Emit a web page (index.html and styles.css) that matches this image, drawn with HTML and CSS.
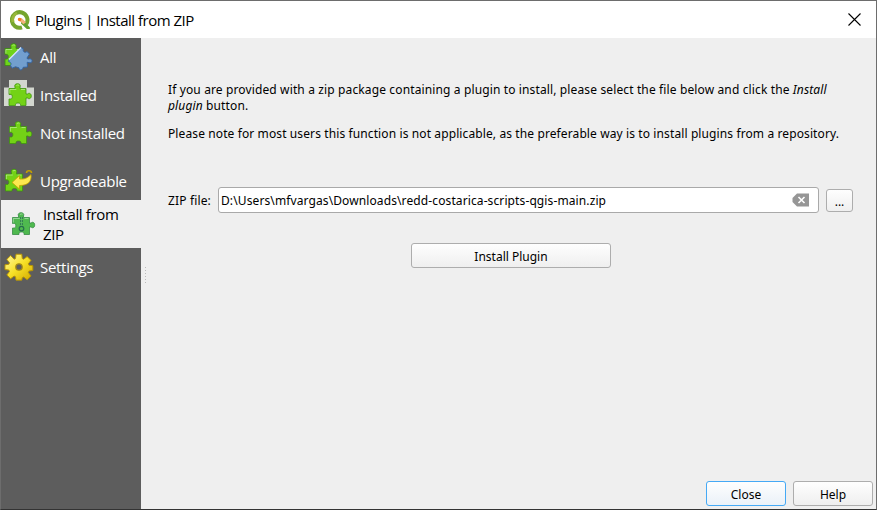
FILE: index.html
```
<!DOCTYPE html>
<html lang="en">
<head>
<meta charset="utf-8">
<title>Plugins | Install from ZIP</title>
<link rel="stylesheet" href="styles.css">
</head>
<body>
<svg class="defs" width="0" height="0">
  <defs>
    <linearGradient id="gold" x1="0" y1="0" x2="1" y2="1"><stop offset="0" stop-color="#fff9a8"/><stop offset=".5" stop-color="#f7e026"/><stop offset="1" stop-color="#d0a800"/></linearGradient>
    <symbol id="puzzle" viewBox="0 0 24 24">
      <path d="M1 5.500h6V4C6 2 7.500.7 9.500.7S13 2 12 4v1.500h6V11h1.500c1.500-1.500 3.800-.5 3.800 2s-2.300 3.500-3.800 2H18v7.500h-5.500V21.500c0-1-1-1.500-2.500-1.500S7.500 20.500 7.500 21.500v1H1V16h1c1.500.3 2.300-.7 2.300-2.300s-.8-2.700-2.300-2.200H1z" stroke-width=".8"/>
      <path d="M1.800 10.500V6.500h6.500M13 6.500h4M8.500 2.500q1-1 2.500-.3" fill="none" stroke="#fff" stroke-opacity=".5" stroke-width=".8"/>
    </symbol>
  </defs>
</svg>
<div class="window">
  <header class="titlebar">
    <svg class="logo" width="20" height="20" viewBox="0 0 20 20">
      <path d="M16.200 14.200A7.800 7.800 0 1 0 12 17.400" fill="none" stroke="#75a52d" stroke-width="4"/>
      <path d="M3 12A7.500 7.500 0 0 1 7 3" fill="none" stroke="#98b83a" stroke-width="3"/>
      <path d="M11 11l2.500-.2 6.300 6.400V19h-3L11 13.500z" fill="#63a02d"/>
      <path d="M8 8h3.500l4.500 4.300-2.500 1.900L8 9.800z" fill="#f3b27a"/>
      <circle cx="9.600" cy="9.500" r="1.700" fill="#f17d1b"/>
    </svg>
    <h1>Plugins | Install from ZIP</h1>
    <svg class="x" width="13" height="13" viewBox="0 0 13 13"><path d="M.5.5l12 12m0-12l-12 12" stroke="#000" stroke-width="1.100"/></svg>
  </header>
  <div class="main">
    <nav class="sidebar">
      <a class="item"><svg width="30" height="30" viewBox="0 0 30 30">
        <use href="#puzzle" x="0" y="1" width="24" height="24" fill="#6fd31b" stroke="#3b8d10"/>
        <path d="M5 17.500L17 5.500l2.300 1.300c-.7 3 1.500 4.500 3.700 2.700l2.500 2.500-2.500 4c.3 1.500 1.500 1 2.700.8 2.300 0 3.300 2.500 1.500 3.700-1.500 1-3-.5-4-.2l.3 4.700-4.300.3c-.8 3.500-4 3.300-4.300.5l-3.400-1-3.300 1.400-1.700-2.500c1.500-3-.5-3.600-1.800-4z" fill="#729fcf" stroke="#3465a4"/><path d="M5 17.500L17 5.500" stroke="#dceaff" stroke-width="1.300"/></svg><span>All</span></a>
      <a class="item"><svg width="30" height="30" viewBox="0 0 30 30">
        <path d="M5 0h18v7.500h7V26H0V7.500h5z" fill="#d3d7cf"/><use href="#puzzle" x="4" y="3" width="24" height="24" fill="#73d216" stroke="#3f9410"/></svg><span>Installed</span></a>
      <a class="item"><svg width="30" height="30" viewBox="0 0 30 30"><use href="#puzzle" x="4.500" y="3" width="24" height="24" fill="#73d216" stroke="#3f9410"/></svg><span>Not installed</span></a>
      <a class="item upgrade"><svg width="30" height="30" viewBox="0 0 30 30">
        <use href="#puzzle" x="0.500" y="2.500" width="24" height="24" fill="#73d216" stroke="#3f9410"/>
        <path d="M8 16.500L15.500 9.500v3.500c5 .5 8-1 11.500-4.500 1 7-3 11-11.500 11v3.500z" fill="#fce94f" stroke="#c4a000" stroke-width=".8"/><path d="M22.500 7c0-3 5-3 5 0" fill="none" stroke="#c4a000" stroke-width="1.600"/></svg><span>Upgradeable</span></a>
      <a class="item selected"><svg width="30" height="30" viewBox="0 0 30 30">
        <use href="#puzzle" x="7.500" y="3" width="24" height="24" fill="#4fb94f" stroke="#378c46"/>
        <path d="M17.500 8v9.500" stroke="#276d4d" stroke-width="2.400" stroke-dasharray="2 1"/><path d="M17.500 8v9.500" stroke="#63bb70" stroke-width=".8"/><circle cx="17.500" cy="19.600" r="2.300" fill="#4fb94f" stroke="#276d4d" stroke-width="1.200"/></svg><span>Install from<br>ZIP</span></a>
      <a class="item"><svg width="30" height="30" viewBox="0 0 30 30">
        <path d="M12 2h6l.5 4.500 1.500.7 3.600-2.800 4 4-2.800 3.600.7 1.500 4 .5v5l-4 .5-.7 1.500 2.800 3.600-4 4-3.600-2.800-1.500.7L18 29h-6l-.5-3.500-1.500-.7-3.600 2.800-4-4L5.200 20l-.7-1.500-4-.5v-5l4-.5.7-1.500-2.800-3.600 4-4L10 7.200l1.500-.7z" transform="translate(.5 .3) scale(.96)" fill="url(#gold)" stroke="#b89400"/><circle cx="15" cy="15" r="3.200" fill="#5d5d5d" stroke="#a58b14" stroke-width="1.300"/></svg><span>Settings</span></a>
    </nav>
    <div class="splitter"></div>
    <main class="content">
      <p class="intro">If you are provided with a zip package containing a plugin to install, please select the file below and click the <i>Install</i><br><i>plugin</i> button.</p>
      <p class="note">Please note for most users this function is not applicable, as the preferable way is to install plugins from a repository.</p>
      <div class="file-row">
        <label>ZIP file:</label>
        <div class="field"><span>D:\Users\mfvargas\Downloads\redd-costarica-scripts-qgis-main.zip</span>
          <svg width="17" height="14" viewBox="0 0 17 14"><path d="M5 .5h12v13H5L.5 9V5z" fill="#969696"/><path d="M6.500 4l6 6m0-6l-6 6" stroke="#fff" stroke-width="1.600"/></svg></div>
        <button class="browse">...</button>
      </div>
      <button class="install">Install Plugin</button>
      <footer><button class="close">Close</button><button>Help</button></footer>
    </main>
  </div>
</div>
</body>
</html>
```
FILE: styles.css
```
* { box-sizing: border-box; }
body { margin: 0; width: 877px; height: 510px; overflow: hidden; font-family: "Noto Sans", sans-serif; font-size: 12px; color: #000; }
.defs { display: block; position: absolute; }
.window { height: 510px; border: 1px solid #6d6d6d; border-bottom-color: #333; display: flex; flex-direction: column; background: #efefef; }
.titlebar { height: 37px; flex: none; display: flex; align-items: center; background: #fff; padding: 0 15px 0 9px; }
.titlebar h1 { margin: 0 auto 0 5px; font-family: "Open Sans", sans-serif; font-weight: 400; font-size: 15px; letter-spacing: -.5px; white-space: nowrap; }
.main { flex: 1; display: flex; min-height: 0; }
.sidebar { width: 140px; flex: none; background: #5d5d5d; font-family: "Open Sans", sans-serif; font-size: 15px; letter-spacing: -.3px; line-height: 20px; color: #fff; }
.item { display: flex; align-items: center; height: 38px; padding-left: 3px; white-space: nowrap; }
.item svg { flex: none; margin-right: 6px; }
.item.upgrade { height: 48px; padding-top: 10px; }
.item.selected { height: 48px; background: #efefef; color: #000; letter-spacing: -.36px; }
.item.selected svg { margin-right: 9px; overflow: visible; }
.splitter { width: 5px; height: 17px; margin-top: 229px; background: repeating-linear-gradient(#bbb 0 1px, transparent 1px 3px) right / 1px 100% no-repeat; }
.content { flex: 1; display: flex; flex-direction: column; padding: 44px 3px 2px 22px; }
p { margin: 0; line-height: 16px; white-space: nowrap; letter-spacing: .11px; }
.intro { letter-spacing: .13px; }
.note { margin-top: 12px; }
.file-row { display: flex; align-items: center; height: 26px; margin: 45px 20px 0 0; }
label { width: 50px; white-space: nowrap; letter-spacing: .15px; }
.field { width: 601px; height: 26px; padding: 0 9px 0 2px; background: #fff; border: 1px solid #a9a9a9; border-radius: 3px; display: flex; align-items: center; justify-content: space-between; letter-spacing: .11px; }
button { width: 80px; height: 25px; padding: 2px 0 0; font: inherit; color: #000; border: 1px solid #adadad; border-radius: 3px; background: linear-gradient(#fefefe, #efefef); }
.browse { width: 27px; height: 23px; margin-left: 7px; }
.install { width: 200px; margin: 30px 0 0 243px; }
footer { display: flex; gap: 7px; justify-content: flex-end; margin-top: auto; margin-bottom: 1px; }
.close { border-color: #45a9f5; background: linear-gradient(#fefefe, #eaf1f8); }
```
